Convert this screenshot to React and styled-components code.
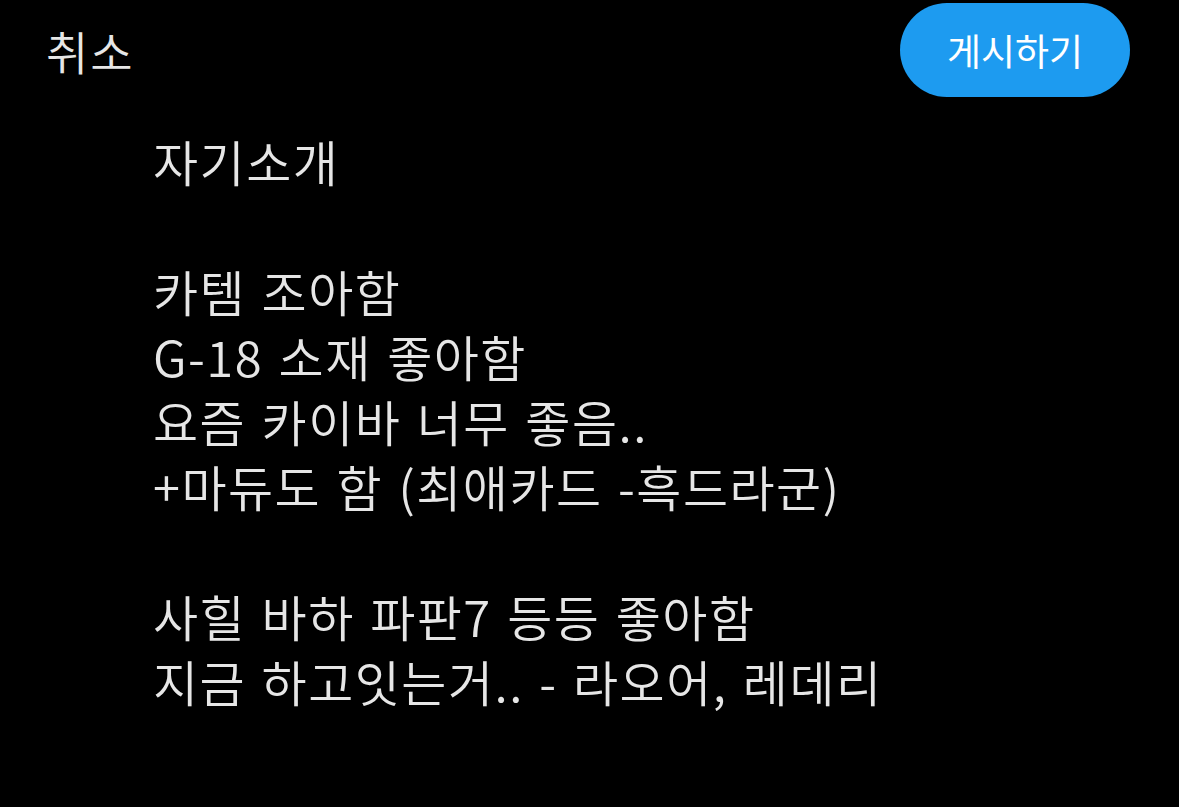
import React from "react";
import styled, { createGlobalStyle } from "styled-components";

const GlobalStyle = createGlobalStyle`
  html, body {
    margin: 0;
    padding: 0;
    background: #000;
  }
  body {
    font-family: "Noto Sans CJK KR", "Noto Sans", sans-serif;
    -webkit-font-smoothing: antialiased;
  }
`;

const Screen = styled.div`
  width: 1179px;
  height: 807px;
  background: #000;
  overflow: hidden;
`;

const Header = styled.div`
  display: flex;
  align-items: center;
  justify-content: space-between;
  padding: 3px 48px 0 46px;
`;

const CancelButton = styled.button`
  background: none;
  border: none;
  padding: 0;
  color: #e6e6e6;
  font-family: inherit;
  font-size: 46px;
  font-weight: 350;
  letter-spacing: 2px;
`;

const PostButton = styled.button`
  width: 230px;
  height: 94px;
  border: none;
  border-radius: 47px;
  background: #1d9bf0;
  color: #fff;
  font-family: inherit;
  font-size: 37px;
  font-weight: 400;
  margin-right: 1px;
`;

const Body = styled.div`
  padding: 31px 0 0 153px;
`;

const Line = styled.div`
  height: 65px;
  line-height: 65px;
  color: #e6e6e6;
  font-size: 49px;
  font-weight: 350;
  letter-spacing: 1.5px;
  word-spacing: 3px;
  white-space: pre;
`;

const lines = [
  "자기소개",
  "",
  "카템 조아함",
  "G-18 소재 좋아함",
  "요즘 카이바 너무 좋음..",
  "+마듀도 함 (최애카드 -흑드라군)",
  "",
  "사힐 바하 파판7 등등 좋아함",
  "지금 하고잇는거.. - 라오어, 레데리",
];

const App = () => {
  return (
    <Screen>
      <GlobalStyle />
      <Header>
        <CancelButton>취소</CancelButton>
        <PostButton>게시하기</PostButton>
      </Header>
      <Body>
        {lines.map((text, i) => (
          <Line key={i}>{text}</Line>
        ))}
      </Body>
    </Screen>
  );
};

export default App;
